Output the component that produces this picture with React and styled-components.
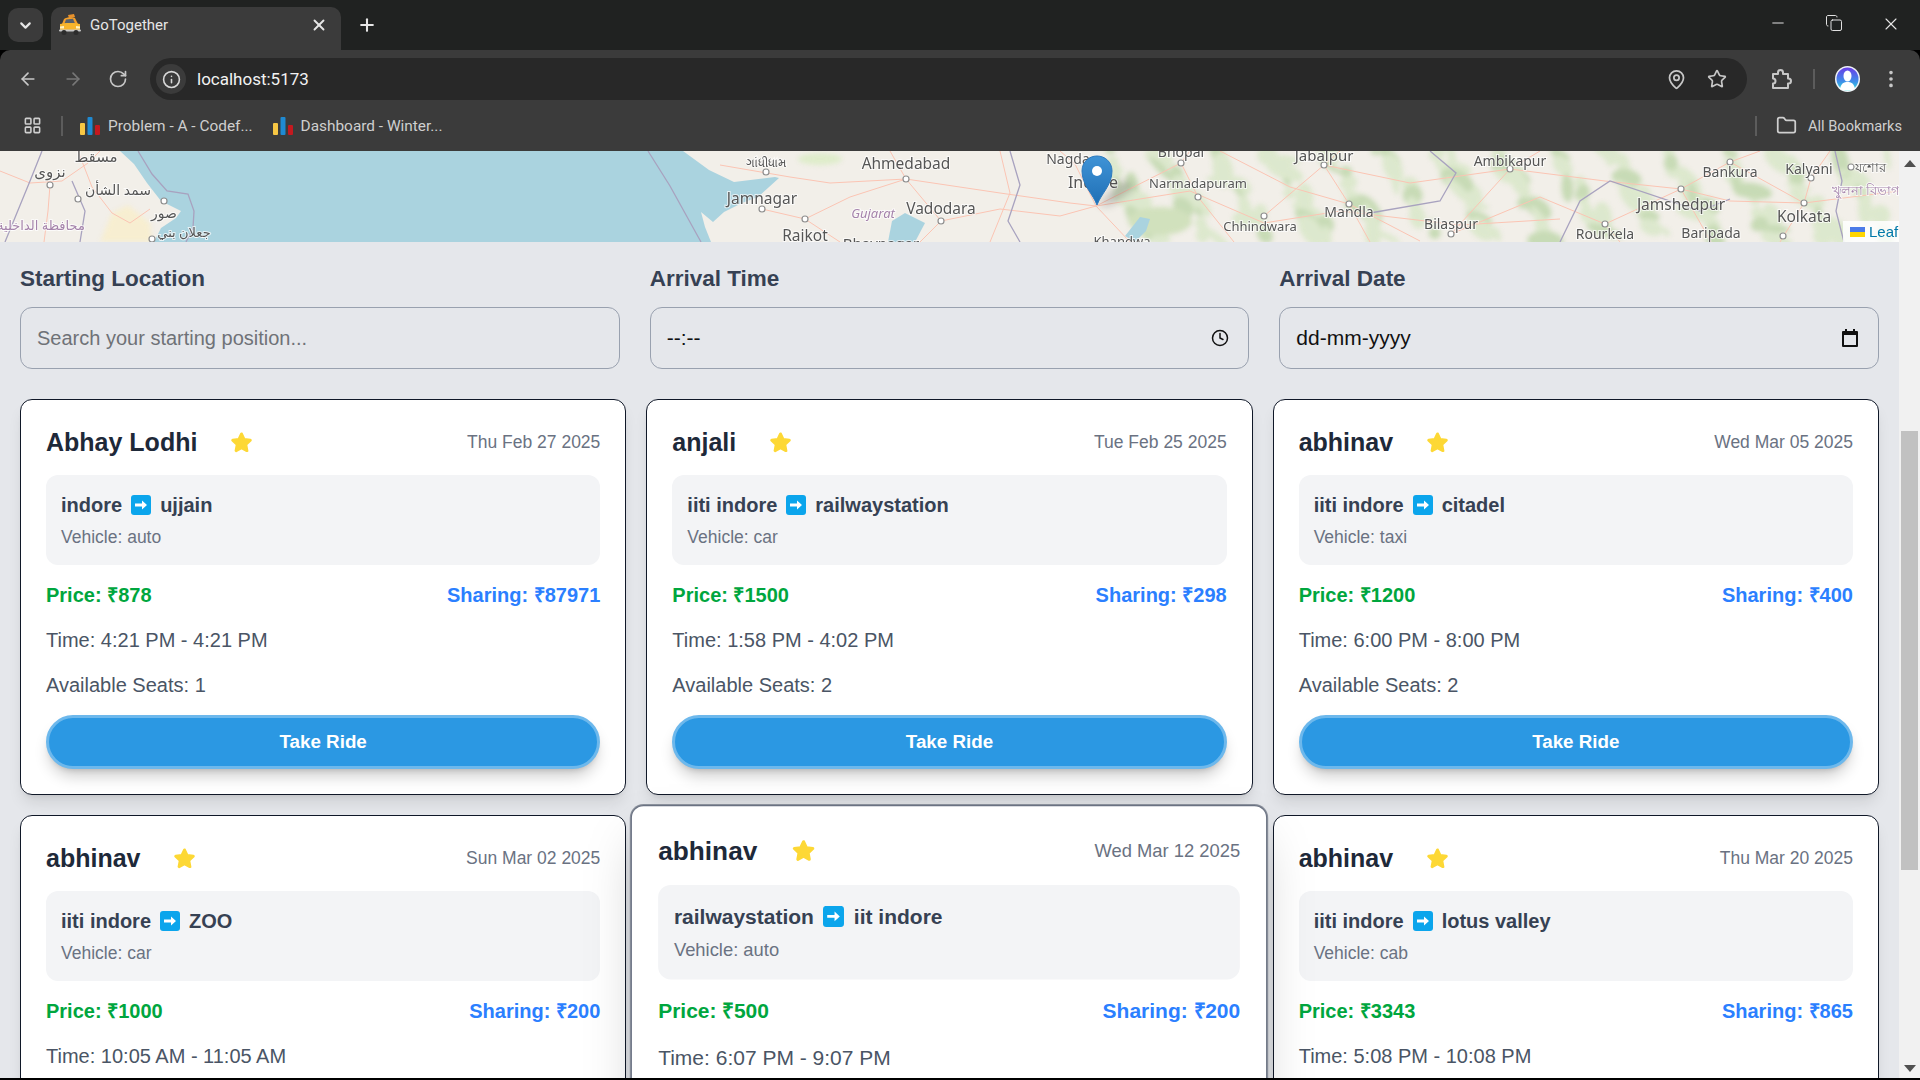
import styled, { createGlobalStyle } from "styled-components";
import {
  ArrowLeft,
  ArrowRight,
  ChevronDown,
  Clock,
  Copy,
  EllipsisVertical,
  Folder,
  Info,
  LayoutGrid,
  MapPin,
  Minus,
  Plus,
  RotateCw,
  Star,
  X,
} from "lucide-react";

const rides = [
  { id: 1, name: "Abhay Lodhi", date: "Thu Feb 27 2025", from: "indore", to: "ujjain", vehicle: "auto", price: 878, sharing: 87971, time: "4:21 PM - 4:21 PM", seats: 1 },
  { id: 2, name: "anjali", date: "Tue Feb 25 2025", from: "iiti indore", to: "railwaystation", vehicle: "car", price: 1500, sharing: 298, time: "1:58 PM - 4:02 PM", seats: 2 },
  { id: 3, name: "abhinav", date: "Wed Mar 05 2025", from: "iiti indore", to: "citadel", vehicle: "taxi", price: 1200, sharing: 400, time: "6:00 PM - 8:00 PM", seats: 2 },
  { id: 4, name: "abhinav", date: "Sun Mar 02 2025", from: "iiti indore", to: "ZOO", vehicle: "car", price: 1000, sharing: 200, time: "10:05 AM - 11:05 AM", seats: 3 },
  { id: 5, name: "abhinav", date: "Wed Mar 12 2025", from: "railwaystation", to: "iit indore", vehicle: "auto", price: 500, sharing: 200, time: "6:07 PM - 9:07 PM", seats: 2, hovered: true },
  { id: 6, name: "abhinav", date: "Thu Mar 20 2025", from: "iiti indore", to: "lotus valley", vehicle: "cab", price: 3343, sharing: 865, time: "5:08 PM - 10:08 PM", seats: 2 },
];

const labels = [
  { x: 96, y: 11, t: "مسقط", s: 15 },
  { x: 50, y: 26, t: "نزوى", s: 15 },
  { x: 118, y: 44, t: "سمد الشأن", s: 14 },
  { x: 164, y: 67, t: "صور", s: 14 },
  { x: 184, y: 86, t: "جعلان بني", s: 13 },
  { x: 41, y: 79, t: "محافظة الداخلية", s: 13, tone: "region" },
  { x: 766, y: 16, t: "ગાંધીધામ", s: 12 },
  { x: 906, y: 18, t: "Ahmedabad", s: 15.5 },
  { x: 762, y: 53, t: "Jamnagar", s: 15.5 },
  { x: 941, y: 63, t: "Vadodara", s: 15.5 },
  { x: 873, y: 67, t: "Gujarat", s: 13, tone: "region", italic: true },
  { x: 805, y: 90, t: "Rajkot", s: 15.5 },
  { x: 881, y: 98, t: "Bhavnagar", s: 15 },
  { x: 1068, y: 13, t: "Nagda", s: 14 },
  { x: 1093, y: 37, t: "Indore", s: 16 },
  { x: 1198, y: 37, t: "Narmadapuram", s: 13 },
  { x: 1260, y: 80, t: "Chhindwara", s: 13 },
  { x: 1122, y: 95, t: "Khandwa", s: 13 },
  { x: 1181, y: 6, t: "Bhopal", s: 14 },
  { x: 1324, y: 10, t: "Jabalpur", s: 15 },
  { x: 1510, y: 15, t: "Ambikapur", s: 14 },
  { x: 1730, y: 26, t: "Bankura", s: 14 },
  { x: 1809, y: 23, t: "Kalyani", s: 14 },
  { x: 1870, y: 21, t: "যশোর", s: 13 },
  { x: 1866, y: 44, t: "খুলনা বিভাগ", s: 13, tone: "region" },
  { x: 1681, y: 59, t: "Jamshedpur", s: 15.5 },
  { x: 1804, y: 71, t: "Kolkata", s: 15.5 },
  { x: 1349, y: 66, t: "Mandla", s: 14 },
  { x: 1451, y: 78, t: "Bilaspur", s: 14 },
  { x: 1605, y: 88, t: "Rourkela", s: 14 },
  { x: 1711, y: 87, t: "Baripada", s: 14 },
];

const towns = [
  [50, 34], [78, 48], [164, 50], [152, 88], [766, 21], [906, 28], [762, 58], [805, 68], [941, 70], [1181, 12], [1198, 46], [1264, 65], [1324, 14], [1349, 53], [1510, 18], [1605, 73], [1681, 38], [1730, 11], [1804, 52], [1811, 27], [1851, 16], [1451, 83], [1783, 85],
];

const roads = [
  "M0 20 L30 32 L62 30 L88 12 L100 0",
  "M50 34 L48 60 L44 91",
  "M78 0 L92 36 L112 62 L130 72 L150 58",
  "M720 14 L790 26 L830 32 L906 28 L1000 42 L1070 52 L1096 55 L1190 40 L1264 72 L1340 60 L1460 74 L1560 68",
  "M906 28 L890 0",
  "M906 28 L941 70 L920 91",
  "M906 28 L850 46 L805 68 L762 58",
  "M805 68 L840 91",
  "M941 70 L1000 58 L1060 65 L1096 55",
  "M1096 55 L1075 13 L1060 0",
  "M1096 55 L1130 91",
  "M1096 55 L1181 12 L1190 0",
  "M1198 46 L1181 12",
  "M1198 46 L1234 91",
  "M1264 65 L1324 14 L1340 0",
  "M1324 14 L1349 53 L1370 91",
  "M1324 14 L1410 32 L1510 18 L1540 0",
  "M1451 83 L1510 18",
  "M1451 83 L1540 46 L1605 73 L1681 38 L1730 50 L1804 52 L1899 40",
  "M1605 73 L1620 91",
  "M1681 38 L1730 11 L1760 0",
  "M1681 38 L1711 91",
  "M1804 52 L1811 27 L1830 0",
  "M1804 52 L1780 91",
  "M1730 11 L1804 52",
  "M1510 18 L1605 30 L1681 38",
  "M1220 0 L1290 36 L1349 53 L1420 90",
  "M1000 0 L1010 42 L990 91",
];

const borders = [
  "M138 0 L152 23 L167 40 L188 43 L194 60 L193 77 L186 91",
  "M5 91 L30 30 L42 0",
  "M72 30 L85 60 L80 91",
  "M648 0 L670 35 L701 91",
  "M1010 0 L1020 34 L1008 70 L1020 91",
  "M1560 91 L1580 50 L1610 30 L1700 60 L1730 48",
  "M1430 0 L1456 22 L1440 50 L1370 62",
  "M1835 0 L1842 30 L1836 60 L1844 91",
];

// deterministic scatter for the green patches of the tile layer
const patches = Array.from({ length: 150 }, (_, i) => {
  const a = (i * 7919) % 1000;
  const b = (i * 104729) % 91;
  return {
    x: 1110 + (a / 1000) * 790,
    y: b,
    rx: 5 + (i * 13) % 16,
    ry: 3 + (i * 7) % 8,
    r: (i * 37) % 90,
  };
});

const GlobalStyle = createGlobalStyle`
  html, body {
    margin: 0;
    padding: 0;
    height: 100%;
    overflow: hidden;
    background: #000;
  }
  * {
    box-sizing: border-box;
  }
`;

const Window = styled.div`
  display: flex;
  flex-direction: column;
  width: 1920px;
  height: 1078px;
  font-family: "Liberation Sans", Arial, sans-serif;
  overflow: hidden;
`;

const TabStrip = styled.div`
  display: flex;
  align-items: flex-end;
  flex: none;
  height: 50px;
  background: #202221;
  color: #e6e6e6;
  font-family: Roboto, sans-serif;
`;

const TabMenu = styled.div`
  display: flex;
  align-items: center;
  justify-content: center;
  align-self: flex-start;
  width: 35px;
  height: 34px;
  margin: 8px 8px 0;
  border-radius: 10px;
  background: #3b3b3b;
`;

const Tab = styled.div`
  display: flex;
  align-items: center;
  width: 290px;
  height: 43px;
  padding: 0 13px 7px 8px;
  border-radius: 10px 10px 0 0;
  background: #3b3b3b;
  font-size: 15px;
`;

const TabTitle = styled.span`
  flex: 1;
  margin-left: 9px;
`;

const NewTab = styled.div`
  display: flex;
  align-self: center;
  margin-left: 16px;
`;

const WindowControls = styled.div`
  display: flex;
  align-self: flex-start;
  gap: 38px;
  margin-left: auto;
  padding: 14px 19px 0 0;
`;

const Toolbar = styled.div`
  display: flex;
  align-items: center;
  flex: none;
  height: 50px;
  padding: 8px 14px 0 18px;
  border-radius: 10px 10px 0 0;
  background: #3b3b3b;
  color: #c7c7c7;
`;

const NavIcons = styled.div`
  display: flex;
  gap: 25px;
  width: 132px;
`;

const Omnibox = styled.div`
  display: flex;
  align-items: center;
  width: 1597px;
  height: 42px;
  padding: 0 20px 0 6px;
  border-radius: 21px;
  background: #282828;
  color: #f2f2f2;
  font-family: Roboto, sans-serif;
  font-size: 17px;
`;

const SiteInfo = styled.div`
  display: flex;
  align-items: center;
  justify-content: center;
  width: 30px;
  height: 30px;
  margin-right: 11px;
  border-radius: 50%;
  background: #3b3b3b;
`;

const OmniActions = styled.div`
  display: flex;
  gap: 20px;
  margin-left: auto;
  color: #c7c7c7;
`;

const ToolActions = styled.div`
  display: flex;
  align-items: center;
  margin-left: 22px;
`;

const Divider = styled.span`
  display: block;
  flex: none;
  width: 2px;
  height: 20px;
  margin-left: ${(p) => p.$offset || 0}px;
  background: #5c5c5c;
`;

const Avatar = styled.div`
  flex: none;
  width: 25px;
  height: 26px;
  margin: 0 20px 0 20px;
`;

const BookmarkBar = styled.div`
  display: flex;
  align-items: center;
  flex: none;
  height: 51px;
  padding: 0 18px 0 23px;
  background: #3b3b3b;
  color: #cfcfcf;
  font-family: Roboto, sans-serif;
  font-size: 15.4px;
`;

const Bookmark = styled.div`
  display: flex;
  align-items: center;
  gap: 8px;
  margin-left: ${(p) => p.$gap}px;
`;

const AllBookmarks = styled.div`
  display: flex;
  align-items: center;
  gap: 11px;
  margin-left: auto;
  font-size: 14.6px;
`;

const FolderGap = styled.span`
  display: flex;
  margin-left: 8px;
`;

const Viewport = styled.div`
  display: flex;
  flex: 1;
  min-height: 0;
`;

const Page = styled.main`
  flex: 1;
  min-width: 0;
  overflow: hidden;
  background: #e5e7eb;
`;

const Scrollbar = styled.div`
  display: flex;
  flex-direction: column;
  align-items: center;
  flex: none;
  width: 21px;
  padding: 9px 0 6px;
  background: #f1f1f1;
`;

const ScrollThumb = styled.div`
  width: 17px;
  height: 439px;
  margin: 264px 0 auto;
  background: #c1c1c1;
`;

const MapBox = styled.div`
  position: relative;
  height: 91px;
  overflow: hidden;
  background: #f2efe9;
`;

const MapArt = styled.svg`
  display: block;
`;

const Soft = styled.g`
  filter: blur(${(p) => p.$blur}px);
  opacity: ${(p) => p.$fade || 1};
`;

const MapLabel = styled.text`
  font-family: "Noto Sans", "DejaVu Sans", sans-serif;
  font-size: ${(p) => p.$size}px;
  font-style: ${(p) => (p.$italic ? "italic" : "normal")};
  text-anchor: middle;
  fill: ${(p) => (p.$tone === "region" ? "#a583ab" : "#555")};
  stroke: rgba(255, 255, 255, 0.7);
  stroke-width: 2px;
  paint-order: stroke;
`;

const Attribution = styled.div`
  position: absolute;
  right: 0;
  bottom: 0;
  display: flex;
  align-items: center;
  gap: 4px;
  width: 56px;
  height: 21px;
  padding-left: 7px;
  overflow: hidden;
  background: rgba(255, 255, 255, 0.85);
  color: #0078a8;
  font-size: 15px;
  white-space: nowrap;
`;

const FlagIcon = styled.svg`
  flex: none;
`;

const Filters = styled.section`
  display: grid;
  grid-template-columns: repeat(3, 1fr);
  gap: 30px;
  padding: 21px 20px 30px;
`;

const FieldLabel = styled.label`
  display: block;
  margin-bottom: 12px;
  color: #364153;
  font-size: 22.5px;
  font-weight: 700;
  line-height: 32px;
`;

const FieldBox = styled.div`
  display: flex;
  align-items: center;
  justify-content: space-between;
  height: 62px;
  padding: 0 19px 0 16px;
  border: 1px solid #99a1af;
  border-radius: 12px;
  color: #111;
  font-size: 21px;
`;

const SearchInput = styled.input`
  width: 100%;
  padding: 0;
  border: 0;
  outline: 0;
  background: transparent;
  font-family: inherit;
  font-size: 20px;
  &::placeholder {
    color: #6f7277;
  }
`;

const CardGrid = styled.section`
  display: grid;
  grid-template-columns: repeat(3, 1fr);
  gap: 20px;
  padding: 0 20px;
`;

const Card = styled.article`
  position: relative;
  z-index: ${(p) => (p.$hovered ? 1 : 0)};
  padding: 24px 25px 25px;
  border: 1px solid ${(p) => (p.$hovered ? "#6a7282" : "#101828")};
  border-radius: 12px;
  background: #fff;
  box-shadow: ${(p) =>
    p.$hovered
      ? "0 0 0 1px #8a909b, 0 25px 50px -12px rgba(0,0,0,.25)"
      : "0 10px 15px -3px rgba(0,0,0,.1), 0 4px 6px -4px rgba(0,0,0,.1)"};
  transform: ${(p) => (p.$hovered ? "scale(1.05)" : "none")};
`;

const CardHead = styled.header`
  display: flex;
  align-items: center;
  height: 37px;
  margin-bottom: 14px;
`;

const Driver = styled.h3`
  margin: 0 33px 0 0;
  color: #1e2939;
  font-size: 25px;
  font-weight: 700;
`;

const RideDate = styled.span`
  margin-left: auto;
  color: #6a7282;
  font-size: 17.5px;
`;

const RouteBox = styled.div`
  height: 90px;
  margin-bottom: 16px;
  padding: 16px 15px;
  border-radius: 12px;
  background: #f3f4f6;
`;

const Route = styled.div`
  display: flex;
  align-items: center;
  gap: 9px;
  height: 28px;
  margin-bottom: 6px;
  color: #364153;
  font-size: 20px;
  font-weight: 700;
`;

const Vehicle = styled.div`
  color: #6a7282;
  font-size: 17.5px;
  line-height: 24px;
`;

const Fares = styled.div`
  display: flex;
  justify-content: space-between;
  margin-bottom: 17px;
  font-size: 20px;
  font-weight: 700;
  line-height: 28px;
`;

const Price = styled.span`
  color: #00a63e;
`;

const Sharing = styled.span`
  color: #2b7fff;
`;

const Detail = styled.p`
  margin: 0 0 17px;
  color: #4a5565;
  font-size: 20px;
  line-height: 28px;
  &:last-of-type {
    margin-bottom: 16px;
  }
`;

const TakeRide = styled.button`
  display: block;
  width: 100%;
  height: 54px;
  border: 3px solid #6db8ec;
  border-radius: 27px;
  background: #2b98e3;
  box-shadow: 0 10px 15px -3px rgba(0,0,0,.2), 0 4px 6px -4px rgba(0,0,0,.2);
  color: #fff;
  font-family: inherit;
  font-size: 18.8px;
  font-weight: 700;
`;

const CalendarIcon = () => (
  <svg width="18" height="20" viewBox="0 0 18 20" fill="#111">
    <path d="M4 1h2v2h6V1h2v2h2a1 1 0 0 1 1 1v14a1 1 0 0 1-1 1H2a1 1 0 0 1-1-1V4a1 1 0 0 1 1-1h2V1Zm-1 6v10h12V7H3Z" />
  </svg>
);

const RouteArrow = () => (
  <svg width="20" height="20" viewBox="0 0 20 20">
    <rect width="20" height="20" rx="3" fill="#0ba5ec" />
    <path d="M4 8.600h7V5.400l5 4.600-5 4.600v-3.200H4z" fill="#fff" />
  </svg>
);

const GoldStar = () => (
  <svg width="23" height="23" viewBox="0 0 24 24" fill="#fdd835" stroke="#fdd835" strokeWidth="3" strokeLinejoin="round">
    <path d="M12 3l2.800 5.900 6.400.8-4.700 4.400 1.200 6.400L12 17.400l-5.700 3.100 1.200-6.400L2.800 9.700l6.400-.8z" />
  </svg>
);

const TaxiFavicon = () => (
  <svg width="22" height="22" viewBox="0 0 22 22">
    <path d="M9 1l6-1 1 3-6 1z" fill="#e8912c" />
    <path d="M5 5c2-2 9-2.500 11-1l3 6H3z" fill="#f29f2b" />
    <path d="M7 5.500l7-.7 2 4.700H5.500z" fill="#57606b" />
    <path d="M1 10c3-1.500 17-1.500 20 0v6H1z" fill="#f7b52c" />
    <path d="M1 12.500l4-.5v2.500H1z" fill="#fff3c4" />
    <path d="M21 12.500l-4-.5v2.500h4z" fill="#fff3c4" />
    <rect x="0" y="15.500" width="22" height="2" rx="1" fill="#c9c9c9" />
    <circle cx="5" cy="18.500" r="2.500" fill="#2c2c2c" />
    <circle cx="17" cy="18.500" r="2.500" fill="#2c2c2c" />
  </svg>
);

const BarsIcon = () => (
  <svg width="20" height="20" viewBox="0 0 20 20">
    <rect x="0" y="7" width="5" height="12" rx="1" fill="#f7c744" />
    <rect x="7.500" y="1" width="5" height="18" rx="1" fill="#1f8ad2" />
    <rect x="15" y="9" width="5" height="10" rx="1" fill="#c4191f" />
  </svg>
);

const PuzzleIcon = () => (
  <svg width="24" height="24" viewBox="0 0 24 24" fill="none" stroke="currentColor" strokeWidth="2" strokeLinejoin="round">
    <path d="M4 7h5V5.500a2.500 2.500 0 0 1 5 0V7h5v4.500h.5a2.500 2.500 0 0 1 0 5H19V21H4v-4.500a2.500 2.500 0 0 0 0-5z" />
  </svg>
);

const ProfileIcon = () => (
  <svg width="25" height="26" viewBox="0 0 25 26">
    <defs>
      <linearGradient id="ring" x1="0" y1="0" x2="0" y2="1">
        <stop offset="0" stopColor="#6a3de8" />
        <stop offset="0.6" stopColor="#3f8ce8" />
        <stop offset="1" stopColor="#2fe0d8" />
      </linearGradient>
    </defs>
    <ellipse cx="12.500" cy="13" rx="12.500" ry="13" fill="#eef2f8" />
    <ellipse cx="12.500" cy="13" rx="11" ry="11.500" fill="url(#ring)" />
    <ellipse cx="12.500" cy="10" rx="4" ry="5.500" fill="#fff" />
    <path d="M5 23c1-6 4-7 7.500-7s6.500 1 7.500 7c-2 1-4.500 1.500-7.500 1.500S7 24 5 23z" fill="#fff" />
  </svg>
);

const WorldMap = () => (
  <MapArt width="1899" height="91" viewBox="0 0 1899 91">
    <defs>
      <linearGradient id="pinFill" x1="0" y1="0" x2="0" y2="1">
        <stop offset="0" stopColor="#3f93d6" />
        <stop offset="1" stopColor="#1f6fb5" />
      </linearGradient>
    </defs>
    <Soft $blur={2.5} $fade={0.75}>
      <path d="M100 91 L112 62 L128 54 L150 72 L152 91Z" fill="#f9eec8" />
      {patches.map((p, i) => (
        <ellipse
          key={i}
          cx={p.x}
          cy={p.y}
          rx={p.rx}
          ry={p.ry}
          fill={i % 3 === 0 ? "#b9d4a4" : "#d5e6c4"}
          transform={`rotate(${p.r} ${p.x} ${p.y})`}
        />
      ))}
      <ellipse cx="820" cy="8" rx="22" ry="6" fill="#d8ecc0" />
      <ellipse cx="1160" cy="70" rx="32" ry="14" fill="#c6dcae" />
    </Soft>
    <Soft $blur={0.6}>
      <path
        d="M120 0 L134 13 L147 32 L161 50 L181 60 L176 67 L161 77 L154 91 L711 91 L705 76 L701 61 L713 71 L724 61 L742 52 L758 46 L779 27 L775 26 L734 31 L709 19 L683 0Z"
        fill="#aad3df"
      />
      <path d="M888 91 L892 70 L905 62 L925 72 L915 91Z" fill="#aad3df" />
      <path d="M1125 85 L1140 66 L1150 68 L1146 80 L1135 91Z" fill="#aad3df" />
      {roads.map((d) => (
        <path key={d} d={d} fill="none" stroke="#fbc4b3" strokeWidth="1" />
      ))}
      {borders.map((d) => (
        <path key={d} d={d} fill="none" stroke="#a8a2bf" strokeWidth="1.3" />
      ))}
      {towns.map(([x, y]) => (
        <circle key={`${x}-${y}`} cx={x} cy={y} r="3" fill="#fff" stroke="#8f8f8f" strokeWidth="1.2" />
      ))}
      {labels.map((l) => (
        <MapLabel key={l.t} x={l.x} y={l.y} $size={l.s} $tone={l.tone} $italic={l.italic}>
          {l.t}
        </MapLabel>
      ))}
    </Soft>
    <Soft $blur={5} $fade={0.7}>
      <path d="M1098 54 L1124 30 L1134 36 L1110 54Z" fill="rgba(0,0,0,.35)" />
    </Soft>
    <g transform="translate(1 1)">
      <path
        d="M1096 53 C1092 42 1081 33 1081 19 C1081 10 1088 4 1096 4 C1104 4 1111 10 1111 19 C1111 33 1100 42 1096 53Z"
        fill="url(#pinFill)"
        stroke="#2a78bd"
      />
      <circle cx="1096" cy="19" r="5" fill="#fff" />
    </g>
  </MapArt>
);

function RideCard({ ride }) {
  return (
    <Card $hovered={ride.hovered}>
      <CardHead>
        <Driver>{ride.name}</Driver>
        <GoldStar />
        <RideDate>{ride.date}</RideDate>
      </CardHead>
      <RouteBox>
        <Route>
          {ride.from}
          <RouteArrow />
          {ride.to}
        </Route>
        <Vehicle>Vehicle: {ride.vehicle}</Vehicle>
      </RouteBox>
      <Fares>
        <Price>Price: ₹{ride.price}</Price>
        <Sharing>Sharing: ₹{ride.sharing}</Sharing>
      </Fares>
      <Detail>Time: {ride.time}</Detail>
      <Detail>Available Seats: {ride.seats}</Detail>
      <TakeRide>Take Ride</TakeRide>
    </Card>
  );
}

export default function App() {
  return (
    <>
      <GlobalStyle />
      <Window>
        <TabStrip>
          <TabMenu>
            <ChevronDown size={17} strokeWidth={3} />
          </TabMenu>
          <Tab>
            <TaxiFavicon />
            <TabTitle>GoTogether</TabTitle>
            <X size={18} strokeWidth={2.5} />
          </Tab>
          <NewTab>
            <Plus size={20} strokeWidth={2.5} />
          </NewTab>
          <WindowControls>
            <Minus size={18} strokeWidth={1.3} />
            <Copy size={18} strokeWidth={1.3} />
            <X size={20} strokeWidth={1.3} />
          </WindowControls>
        </TabStrip>
        <Toolbar>
          <NavIcons>
            <ArrowLeft size={20} />
            <ArrowRight size={20} color="#777" />
            <RotateCw size={20} />
          </NavIcons>
          <Omnibox>
            <SiteInfo>
              <Info size={19} color="#d8d8d8" />
            </SiteInfo>
            localhost:5173
            <OmniActions>
              <MapPin size={21} />
              <Star size={20} />
            </OmniActions>
          </Omnibox>
          <ToolActions>
            <PuzzleIcon />
            <Divider $offset={20} />
            <Avatar>
              <ProfileIcon />
            </Avatar>
            <EllipsisVertical size={22} />
          </ToolActions>
        </Toolbar>
        <BookmarkBar>
          <LayoutGrid size={19} />
          <Divider $offset={19} />
          <Bookmark $gap={17}>
            <BarsIcon />
            Problem - A - Codef...
          </Bookmark>
          <Bookmark $gap={20}>
            <BarsIcon />
            Dashboard - Winter...
          </Bookmark>
          <AllBookmarks>
            <Divider />
            <FolderGap>
              <Folder size={21} />
            </FolderGap>
            All Bookmarks
          </AllBookmarks>
        </BookmarkBar>
        <Viewport>
          <Page>
            <MapBox>
              <WorldMap />
              <Attribution>
                <FlagIcon width="15" height="10" viewBox="0 0 15 10">
                  <rect width="15" height="5" fill="#4c7be8" />
                  <rect y="5" width="15" height="5" fill="#ffd500" />
                </FlagIcon>
                Leaflet
              </Attribution>
            </MapBox>
            <Filters>
              <div>
                <FieldLabel>Starting Location</FieldLabel>
                <FieldBox>
                  <SearchInput placeholder="Search your starting position..." />
                </FieldBox>
              </div>
              <div>
                <FieldLabel>Arrival Time</FieldLabel>
                <FieldBox>
                  --:--
                  <Clock size={18} color="#111" />
                </FieldBox>
              </div>
              <div>
                <FieldLabel>Arrival Date</FieldLabel>
                <FieldBox>
                  dd-mm-yyyy
                  <CalendarIcon />
                </FieldBox>
              </div>
            </Filters>
            <CardGrid>
              {rides.map((ride) => (
                <RideCard key={ride.id} ride={ride} />
              ))}
            </CardGrid>
          </Page>
          <Scrollbar>
            <svg width="12" height="7" viewBox="0 0 12 7" fill="#505050"><path d="M6 0l6 7H0z" /></svg>
            <ScrollThumb />
            <svg width="12" height="7" viewBox="0 0 12 7" fill="#505050"><path d="M6 7L0 0h12z" /></svg>
          </Scrollbar>
        </Viewport>
      </Window>
    </>
  );
}
